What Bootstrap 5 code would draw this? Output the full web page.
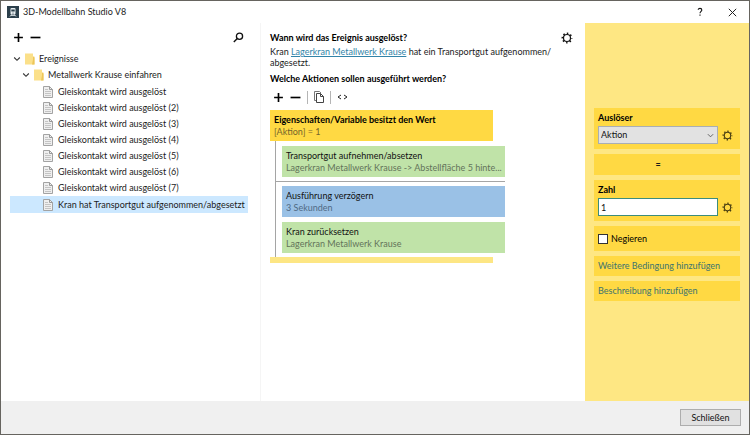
<!DOCTYPE html>
<html lang="de">
<head>
<meta charset="utf-8">
<meta name="viewport" content="width=device-width, initial-scale=1">
<title>3D-Modellbahn Studio V8</title>
<link href="https://cdn.jsdelivr.net/npm/bootstrap@5.3.0/dist/css/bootstrap.min.css" rel="stylesheet">
<style>
  body { font-family: Lato, "Open Sans", sans-serif; font-size: 9px; line-height: 12px; color: #1c1c1c; background: #fff; }
  .app-window { border: 1px solid #66645f; }
  .title-bar { height: 22px; padding: 0 12px 0 6px; }
  .window-buttons { gap: 24px; }
  .plain-btn { border: 0; padding: 0; background: none; color: #111; line-height: 0; }
  .main-area { display: grid; grid-template-columns: 260px minmax(0, 1fr) 164px; }
  .tree-pane { padding: 8px 12px 8px 9px; border-right: 1px solid #f5f5f5; }
  .tree-tools { height: 12px; padding: 0 4px 0 3px; gap: 6px; margin-bottom: 8px; }
  .leaf-list { margin-top: 1px; }
  .tree-row { height: 16px; gap: 5px; white-space: nowrap; }
  .tree-branch { gap: 4px; }
  .level-0 { padding-left: 3px; }
  .level-1 { padding-left: 12px; }
  .level-2 { padding-left: 33px; }
  .tree-row.selected { background: #cce8ff; height: 17px; }
  .rule-pane { padding: 9px 12px 8px 9px; }
  .rule-text { line-height: 11px; margin: 2px 0 5px; max-width: 285px; }
  .heading-text { font-weight: 700; font-size: 9px; line-height: 12px; margin: 0; color: #000; }
  .rule-link { color: #3284a8; }
  .rule-tools { height: 12px; gap: 6px; margin: 6px 0 7px; padding-left: 3px; }
  .tool-line { width: 1px; height: 13px; background: #b5b5b5; }
  .block { height: 31px; padding: 4px 4px 3px; width: 223px; max-width: 100%; color: #111; }
  .block p { margin: 0; line-height: 12px; }
  .block .sub { color: #666; }
  .block-condition { background: #ffd943; color: #000; }
  .block-condition .sub { color: #75652c; }
  .block-green { background: #c0e3a8; }
  .block-green .sub { color: #63735a; }
  .block-blue { background: #9ac1e6; }
  .block-blue .sub { color: #506a84; }
  .block-list { margin-left: 5px; border-left: 1px solid #a5a5a5; padding: 5px 0 4px; width: 230px; gap: 5px; }
  .block-list .block { margin-left: 6px; }
  .split-line { height: 1px; background: #a5a5a5; margin: -1px 0; }
  .block-end { height: 6px; width: 223px; background: #fde684; }
  .prop-pane { background: #fee783; padding: 85px 9px 8px; }
  .prop-list { gap: 5px; }
  .prop { background: #ffd943; padding: 4px; }
  .prop label { color: #000; display: block; }
  .prop-row { gap: 4px; margin-top: 2px; padding-right: 3px; }
  .prop-row .plain-btn { color: #463c12; }
  .prop-tall { height: 41px; }
  .prop-equal { height: 21px; padding-right: 22px; }
  .prop-link { height: 20px; }
  .prop-link a { color: #3d746f; text-decoration: none; }
  .prop select, .prop input[type=text] { min-width: 0; height: 18px; border: 1px solid #a9aeb3; border-radius: 0; font-size: 9px; line-height: 12px; padding: 0 2px; color: #111; }
  .prop select { appearance: none; background: #e2e2e2 url("data:image/svg+xml,%3Csvg xmlns='http://www.w3.org/2000/svg' viewBox='0 0 8 5'%3E%3Cpath d='M1 1l3 3 3-3' fill='none' stroke='%23555'/%3E%3C/svg%3E") no-repeat right 3px center / 7px 5px; }
  .prop input[type=text] { background: #fff; border-color: #3c8c7c; }
  .prop input[type=checkbox] { appearance: none; width: 10px; height: 10px; margin: 0; border: 1px solid #333; background: #fff; }
  .prop-check { height: 25px; gap: 3px; }
  .bottom-bar { height: 33px; background: #f0f0f0; padding-right: 8px; }
  .close-btn { width: 61px; height: 17px; border: 1px solid #adadad; background: #e1e1e1; font-size: 9px; line-height: 12px; padding: 0; color: #111; }
  svg { display: block; flex: none; }
</style>
</head>
<body>
<svg width="0" height="0" class="position-absolute" aria-hidden="true">
  <symbol id="plus" viewBox="0 0 10 10"><path d="M5 1v8M1 5h8" stroke="#000" stroke-width="1.5"/></symbol>
  <symbol id="minus" viewBox="0 0 10 10"><path d="M.5 5h9" stroke="#000" stroke-width="1.5"/></symbol>
  <symbol id="gear" viewBox="0 0 12 12"><circle cx="6" cy="6" r="4.700" fill="none" stroke="currentColor" stroke-width="1.500" stroke-dasharray="1.500 2.191" stroke-dashoffset=".75"/><circle cx="6" cy="6" r="3.500" fill="none" stroke="currentColor" stroke-width="1.200"/></symbol>
  <symbol id="open" viewBox="0 0 8 8"><path d="M1.200 2.500L4 5.300l2.800-2.800" fill="none" stroke="#333" stroke-width="1.100"/></symbol>
  <symbol id="folder" viewBox="0 0 10 12"><path d="M0 .500h8v3h1.500v8H0z" fill="#fbe08a"/><path d="M8 .500v6L7 11.500h2.500v-7L8 3.500z" fill="#edc659"/></symbol>
  <symbol id="sheet" viewBox="0 0 10 12"><path d="M.5.500h6l3 3v8h-9z" fill="#efefef" stroke="#a3a3a3"/><path d="M6.500.500v3h3" fill="none" stroke="#999"/><path d="M2 3.500h3M2 5.500h6M2 7.500h6M2 9.500h6" stroke="#c4c4c4"/></symbol>
</svg>
<div class="app-window d-flex flex-column min-vh-100">
  <header class="title-bar d-flex align-items-center justify-content-between">
    <div class="d-flex align-items-center gap-1">
      <svg width="12" height="12" viewBox="0 0 12 12"><path d="M0 0h12v12H0z" fill="#2b3f4b"/><rect x="3.500" y="2" width="5" height="6.500" rx="1" fill="#e8eef0"/><path d="M4.300 3.500h3.400v2H4.300z" fill="#2b3f4b"/><path d="M4.500 8.500L3 10.500M7.500 8.500L9 10.500M4 9.500h4" stroke="#e8eef0" stroke-width=".8"/><circle cx="6" cy="7" r=".6" fill="#2b3f4b"/></svg>
      <span>3D-Modellbahn Studio V8</span>
    </div>
    <div class="window-buttons d-flex align-items-center">
      <button class="plain-btn" type="button" aria-label="Hilfe"><svg width="8" height="10" viewBox="0 0 8 10"><path d="M2.200 2.800C2.200.800 5.800.900 5.800 2.900 5.800 4.400 4 4.300 4 6.300M4 7.500v1.300" fill="none" stroke="#111" stroke-width="1.100"/></svg></button>
      <button class="plain-btn" type="button" aria-label="Fenster schließen"><svg width="9" height="9" viewBox="0 0 9 9"><path d="M.8.800l7.400 7.400M8.200.800L.8 8.200" stroke="#222"/></svg></button>
    </div>
  </header>
  <main class="main-area flex-grow-1">
    <nav class="tree-pane" aria-label="Ereignisse">
      <div class="tree-tools d-flex align-items-center">
        <button class="plain-btn" type="button" aria-label="Hinzufügen"><svg width="11" height="11"><use href="#plus"/></svg></button>
        <button class="plain-btn" type="button" aria-label="Entfernen"><svg width="11" height="11"><use href="#minus"/></svg></button>
        <button class="plain-btn ms-auto" type="button" aria-label="Suchen"><svg width="11" height="11" viewBox="0 0 11 11"><circle cx="6.500" cy="4.200" r="3.100" fill="none" stroke="#111" stroke-width="1.300"/><path d="M4.300 6.500L.8 10" stroke="#111" stroke-width="1.400"/></svg></button>
      </div>
      <ul class="tree list-unstyled mb-0">
        <li><div class="tree-row tree-branch level-0 d-flex align-items-center"><svg width="8" height="8"><use href="#open"/></svg><svg width="10" height="12"><use href="#folder"/></svg><span>Ereignisse</span></div>
          <ul class="list-unstyled">
            <li><div class="tree-row tree-branch level-1 d-flex align-items-center"><svg width="8" height="8"><use href="#open"/></svg><svg width="10" height="12"><use href="#folder"/></svg><span>Metallwerk Krause einfahren</span></div>
              <ul class="leaf-list list-unstyled">
                <li class="tree-row level-2 d-flex align-items-center"><svg width="10" height="12"><use href="#sheet"/></svg><span>Gleiskontakt wird ausgelöst</span></li>
                <li class="tree-row level-2 d-flex align-items-center"><svg width="10" height="12"><use href="#sheet"/></svg><span>Gleiskontakt wird ausgelöst (2)</span></li>
                <li class="tree-row level-2 d-flex align-items-center"><svg width="10" height="12"><use href="#sheet"/></svg><span>Gleiskontakt wird ausgelöst (3)</span></li>
                <li class="tree-row level-2 d-flex align-items-center"><svg width="10" height="12"><use href="#sheet"/></svg><span>Gleiskontakt wird ausgelöst (4)</span></li>
                <li class="tree-row level-2 d-flex align-items-center"><svg width="10" height="12"><use href="#sheet"/></svg><span>Gleiskontakt wird ausgelöst (5)</span></li>
                <li class="tree-row level-2 d-flex align-items-center"><svg width="10" height="12"><use href="#sheet"/></svg><span>Gleiskontakt wird ausgelöst (6)</span></li>
                <li class="tree-row level-2 d-flex align-items-center"><svg width="10" height="12"><use href="#sheet"/></svg><span>Gleiskontakt wird ausgelöst (7)</span></li>
                <li class="tree-row level-2 selected d-flex align-items-center"><svg width="10" height="12"><use href="#sheet"/></svg><span>Kran hat Transportgut aufgenommen/abgesetzt</span></li>
              </ul>
            </li>
          </ul>
        </li>
      </ul>
    </nav>
    <section class="rule-pane">
      <div class="d-flex justify-content-between">
        <h1 class="heading-text">Wann wird das Ereignis ausgelöst?</h1>
        <button class="plain-btn" type="button" aria-label="Einstellungen"><svg width="12" height="12"><use href="#gear"/></svg></button>
      </div>
      <p class="rule-text">Kran <a class="rule-link" href="#">Lagerkran Metallwerk Krause</a> hat ein Transportgut aufgenommen/<wbr>abgesetzt.</p>
      <h2 class="heading-text">Welche Aktionen sollen ausgeführt werden?</h2>
      <div class="rule-tools d-flex align-items-center">
        <button class="plain-btn" type="button" aria-label="Aktion hinzufügen"><svg width="11" height="11"><use href="#plus"/></svg></button>
        <button class="plain-btn" type="button" aria-label="Aktion entfernen"><svg width="11" height="11"><use href="#minus"/></svg></button>
        <span class="tool-line"></span>
        <button class="plain-btn" type="button" aria-label="Kopieren"><svg width="10" height="12" viewBox="0 0 10 12"><path d="M2.500 9.500h-2v-9h5l1.500 1.500" fill="none" stroke="#777"/><path d="M2.500 2.500h4l3 3v6h-7zM6.500 2.500v3h3" fill="#fff" stroke="#444"/></svg></button>
        <span class="tool-line"></span>
        <button class="plain-btn" type="button" aria-label="Code"><svg width="12" height="8" viewBox="0 0 12 8"><path d="M4 2L1 4l3 2M7 2l3 2-3 2" fill="none" stroke="#222"/></svg></button>
      </div>
      <div class="block block-condition"><p class="fw-bold">Eigenschaften/Variable besitzt den Wert</p><p class="sub">[Aktion] = 1</p></div>
      <div class="block-list d-flex flex-column">
        <div class="block block-green"><p>Transportgut aufnehmen/absetzen</p><p class="sub text-nowrap">Lagerkran Metallwerk Krause -&gt; Abstellfläche 5 hinte...</p></div>
        <div class="split-line"></div>
        <div class="block block-blue"><p>Ausführung verzögern</p><p class="sub">3 Sekunden</p></div>
        <div class="block block-green"><p>Kran zurücksetzen</p><p class="sub">Lagerkran Metallwerk Krause</p></div>
      </div>
      <div class="block-end"></div>
    </section>
    <aside class="prop-pane">
      <div class="prop-list d-flex flex-column">
        <div class="prop prop-tall">
          <label class="fw-bold" for="trigger">Auslöser</label>
          <div class="prop-row d-flex align-items-center"><select id="trigger" class="flex-grow-1"><option>Aktion</option></select><button class="plain-btn" type="button" aria-label="Auslöser einstellen"><svg width="11" height="11"><use href="#gear"/></svg></button></div>
        </div>
        <div class="prop prop-equal d-flex align-items-center justify-content-center fw-bold">=</div>
        <div class="prop prop-tall">
          <label class="fw-bold" for="number">Zahl</label>
          <div class="prop-row d-flex align-items-center"><input id="number" class="flex-grow-1" type="text" value="1"><button class="plain-btn" type="button" aria-label="Zahl einstellen"><svg width="11" height="11"><use href="#gear"/></svg></button></div>
        </div>
        <div class="prop prop-check d-flex align-items-center"><input id="negate" type="checkbox"><label for="negate">Negieren</label></div>
        <div class="prop prop-link d-flex align-items-center"><a href="#">Weitere Bedingung hinzufügen</a></div>
        <div class="prop prop-link d-flex align-items-center"><a href="#">Beschreibung hinzufügen</a></div>
      </div>
    </aside>
  </main>
  <footer class="bottom-bar d-flex align-items-center justify-content-end"><button class="close-btn" type="button">Schließen</button></footer>
</div>
<script src="https://cdn.jsdelivr.net/npm/bootstrap@5.3.0/dist/js/bootstrap.bundle.min.js"></script>
</body>
</html>
